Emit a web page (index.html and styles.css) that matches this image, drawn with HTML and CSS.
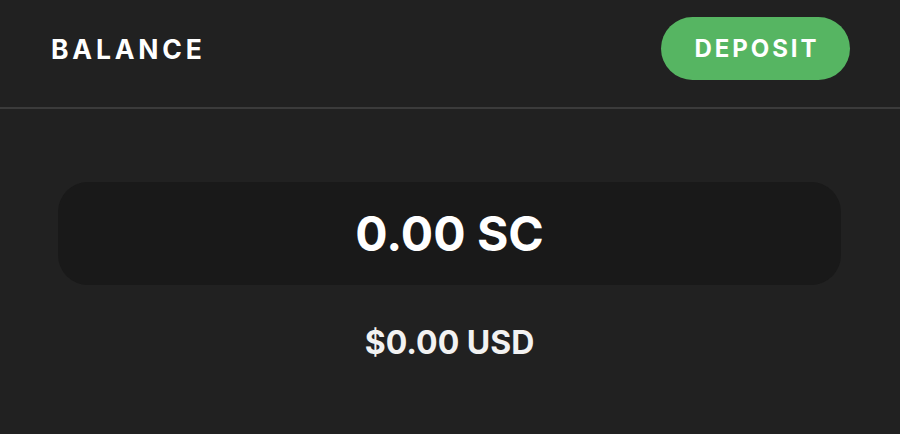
FILE: index.html
```html
<!DOCTYPE html>
<html>
<head>
<meta charset="utf-8">
<link rel="stylesheet" href="styles.css">
</head>
<body>
<div class="panel">
  <header class="header">
    <h1 class="title">BALANCE</h1>
    <button class="deposit"><span class="deposit-label">DEPOSIT</span></button>
  </header>
  <main class="content">
    <div class="balance-card">
      <span class="balance-amount">0.00 SC</span>
    </div>
    <div class="usd">$0.00 USD</div>
  </main>
</div>
</body>
</html>
```
FILE: styles.css
```css
html, body {
  margin: 0;
  padding: 0;
  background: #212121;
  font-family: Inter, "Noto Sans", sans-serif;
  color: #ffffff;
}
.panel {
  width: 900px;
  height: 434px;
  background: #212121;
}
.header {
  display: flex;
  align-items: center;
  justify-content: space-between;
  padding: 17px 50px 27px 51px;
  border-bottom: 2px solid #3b3b3b;
}
.title {
  margin: 0;
  font-size: 26.5px;
  font-weight: 700;
  letter-spacing: 3.8px;
}
.deposit {
  height: 63px;
  width: 189px;
  border: none;
  border-radius: 32px;
  background: #56b562;
  color: #ffffff;
  font-family: Inter, "Noto Sans", sans-serif;
  font-size: 24px;
  font-weight: 700;
  padding: 0;
  display: flex;
  align-items: center;
  justify-content: center;
}
.deposit-label {
  letter-spacing: 2.9px;
  margin-right: -2.9px;
}
.content {
  padding: 73px 59px 0 58px;
  display: flex;
  flex-direction: column;
  align-items: stretch;
}
.balance-card {
  height: 103px;
  background: #191919;
  border-radius: 30px;
  display: flex;
  align-items: center;
  justify-content: center;
}
.balance-amount {
  font-size: 48px;
  font-weight: 700;
}
.usd {
  margin-top: 38px;
  text-align: center;
  font-size: 32px;
  font-weight: 700;
  color: #f2f2f2;
}
```
